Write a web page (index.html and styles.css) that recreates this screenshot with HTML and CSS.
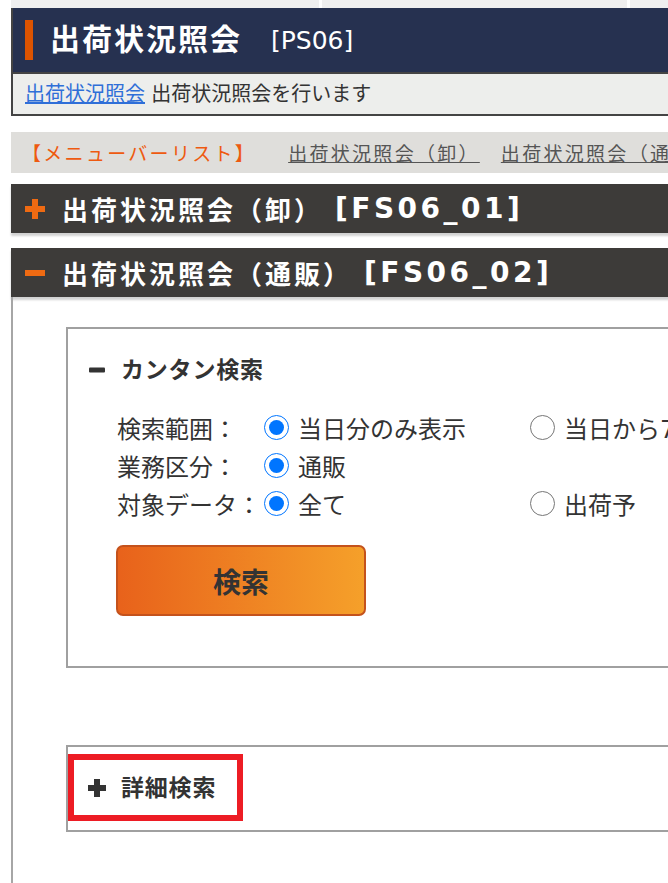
FILE: index.html
```html
<!DOCTYPE html>
<html lang="ja">
<head>
  <meta charset="UTF-8">
  <meta name="viewport" content="width=device-width, initial-scale=1.0">
  <title>出荷状況照会</title>
  <link rel="stylesheet" href="styles.css">
</head>
<body>
  <div class="top-strip">
    <div class="top-cell"></div>
    <div class="top-cell"></div>
    <div class="top-cell"></div>
  </div>

  <div class="page-head">
    <div class="title-bar">
      <span class="title-mark"></span>
      <h1>出荷状況照会</h1>
      <span class="screen-id">[PS06]</span>
    </div>
    <p class="page-desc"><a href="#">出荷状況照会</a> 出荷状況照会を行います</p>
  </div>

  <div class="menu-bar">
    <span class="menu-label">【メニューバーリスト】</span>
    <a href="#fs06_01">出荷状況照会（卸）</a>
    <a href="#fs06_02">出荷状況照会（通販）</a>
  </div>

  <h2 class="section-head" id="fs06_01">
    <svg class="toggle" width="20" height="20" viewBox="0 0 20 20"><path d="M7 0h6v7h7v6h-7v7H7v-7H0V7h7z" fill="#ef6a12"/></svg>
    出荷状況照会（卸）<span class="code">[FS06_01]</span>
  </h2>
  <h2 class="section-head" id="fs06_02">
    <svg class="toggle" width="20" height="20" viewBox="0 0 20 20"><rect x="0" y="7" width="20" height="6" fill="#ef6a12"/></svg>
    出荷状況照会（通販）<span class="code">[FS06_02]</span>
  </h2>

  <div class="section-body">
    <div class="panel">
      <h3 class="panel-head">
        <svg class="icon" width="18" height="18" viewBox="0 0 18 18"><rect x="1" y="6.5" width="16" height="5" rx="1" fill="#333"/></svg>
        カンタン検索
      </h3>
      <table class="search-form">
        <tr>
          <th>検索範囲：</th>
          <td><label><input type="radio" name="range" checked>当日分のみ表示</label></td>
          <td><label><input type="radio" name="range">当日から7日間表示</label></td>
        </tr>
        <tr>
          <th>業務区分：</th>
          <td><label><input type="radio" name="kind" checked>通販</label></td>
          <td></td>
        </tr>
        <tr>
          <th>対象データ：</th>
          <td><label><input type="radio" name="target" checked>全て</label></td>
          <td><label><input type="radio" name="target">出荷予</label></td>
        </tr>
      </table>
      <button class="search-btn">検索</button>
    </div>

    <div class="panel collapsed">
      <h3 class="panel-head">
        <svg class="icon" width="18" height="18" viewBox="0 0 18 18"><path d="M6 0h6v6h6v6h-6v6H6v-6H0V6h6z" fill="#333"/></svg>
        詳細検索
      </h3>
      <span class="highlight"></span>
    </div>
  </div>
</body>
</html>
```

FILE: styles.css
```css
html {
  overflow: hidden;
}
body {
  margin: 0;
  width: 1100px;
  font-family: "DejaVu Sans", "Noto Sans CJK JP", sans-serif;
  color: #333;
  background: #fff;
}

/* strip of the frame above */
.top-strip {
  display: flex;
  gap: 3px;
  height: 8px;
  margin-left: 11px;
}
.top-cell {
  background: #efefef;
}
.top-cell:nth-child(1) {
  width: 308px;
}
.top-cell:nth-child(2) {
  width: 305px;
}
.top-cell:nth-child(3) {
  flex: 1;
}

/* page title */
.page-head {
  margin-left: 11px;
  border: 2px solid #444;
  border-top: 0;
}
.title-bar {
  display: flex;
  align-items: center;
  height: 64px;
  padding-left: 12px;
  background: #263150;
  border-bottom: 2px solid #444;
  color: #fff;
}
.title-mark {
  width: 8px;
  height: 40px;
  background: #dc5300;
}
.title-bar h1 {
  margin: 0 0 0 17px;
  font-size: 30px;
  line-height: 1;
  letter-spacing: 2px;
}
.screen-id {
  margin-left: 29px;
  font-size: 25px;
}
.page-desc {
  margin: 0;
  height: 40px;
  padding-left: 12px;
  line-height: 40px;
  font-size: 20px;
  background: #edeeec;
}
.page-desc a {
  color: #2f6fd8;
}

/* menu bar */
.menu-bar {
  display: flex;
  align-items: center;
  height: 41px;
  margin: 16px 0 11px 11px;
  padding-left: 11px;
  background: #dfdedb;
  font-size: 19px;
  letter-spacing: 2.3px;
}
.menu-label {
  color: #ee5a10;
  margin-right: 32px;
}
.menu-bar a {
  color: #555;
  margin-right: 21px;
}

/* section headers */
.section-head {
  display: flex;
  align-items: center;
  height: 49px;
  margin: 0 0 15px 11px;
  padding-left: 14px;
  background: #3d3b39;
  color: #fff;
  font-size: 26px;
  letter-spacing: 3px;
  box-shadow: 0 3px 2px rgba(0, 0, 0, 0.18);
}
.section-head:last-of-type {
  margin-bottom: 0;
}
.section-head .code {
  margin-left: 12px;
  font-size: 28px;
  letter-spacing: 3.5px;
}
.toggle {
  margin-right: 17px;
  flex-shrink: 0;
}

.section-body {
  margin-left: 11px;
  padding: 30px 0 0 53px;
  min-height: 700px;
  border-left: 2px solid #a6a6a6;
}

/* search panels */
.panel {
  position: relative;
  width: 900px;
  border: 2px solid #a0a0a0;
}
.panel.collapsed {
  margin-top: 77px;
  padding-bottom: 4px;
}
.panel-head {
  display: flex;
  align-items: center;
  margin: 0;
  padding: 28px 20px 25px;
  font-size: 23px;
  line-height: 26px;
  letter-spacing: 0.8px;
  color: #333;
}
.icon {
  margin-right: 15px;
}

.search-form {
  margin-left: 49px;
  border-collapse: collapse;
  font-size: 24px;
}
.search-form th {
  width: 145px;
  height: 38px;
  padding: 0;
  text-align: left;
  font-weight: normal;
  white-space: nowrap;
}
.search-form td {
  width: 266px;
  padding: 0;
  white-space: nowrap;
}
.search-form label {
  display: flex;
  align-items: center;
}
.search-form input[type="radio"] {
  width: 25px;
  height: 25px;
  margin: 0 9px 0 2px;
}

.search-btn {
  display: block;
  width: 250px;
  height: 71px;
  margin: 23px 0 50px 48px;
  background: linear-gradient(to right, #e8621b, #f5a02a);
  border: 2px solid #c4521c;
  border-radius: 7px;
  font-family: inherit;
  font-size: 28px;
  font-weight: bold;
  color: #333;
}

/* red annotation frame */
.highlight {
  position: absolute;
  top: 7px;
  left: 0;
  width: 175px;
  height: 67px;
  box-sizing: border-box;
  border: 6px solid #ed1c24;
}
```
